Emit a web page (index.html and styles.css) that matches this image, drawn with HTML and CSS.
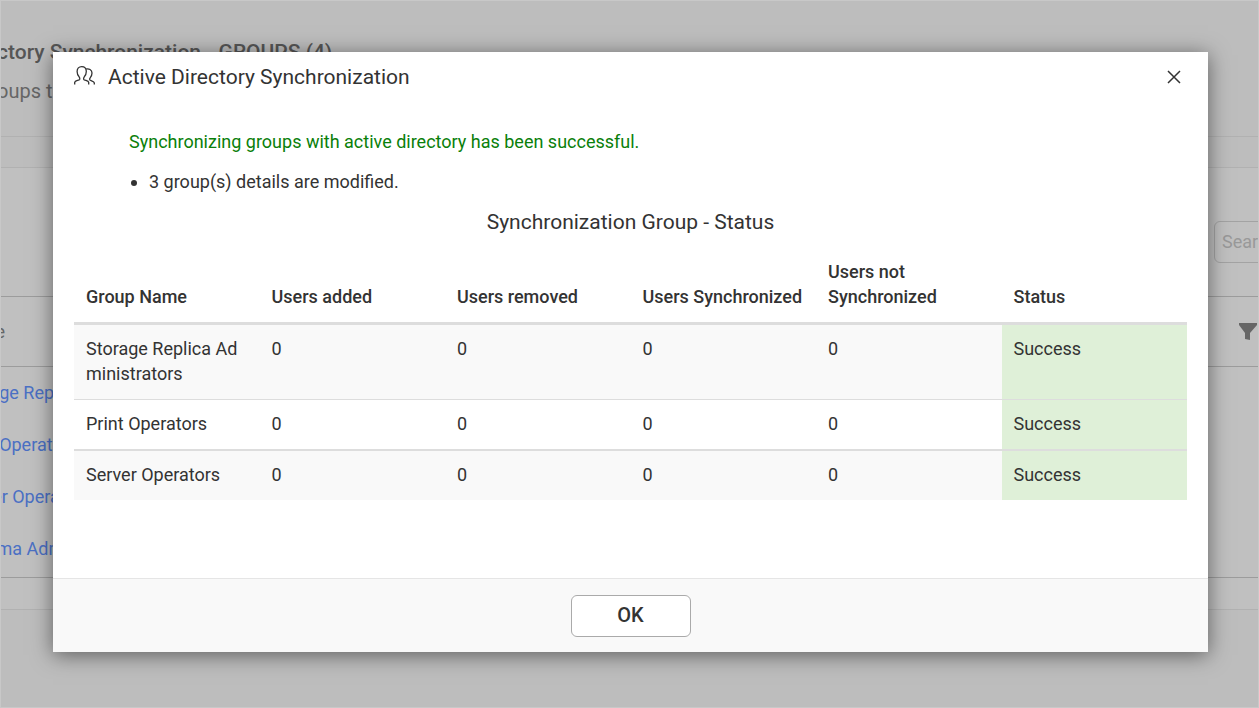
FILE: index.html
```html
<!DOCTYPE html>
<html lang="en">
<head>
<meta charset="utf-8">
<title>Active Directory Synchronization</title>
<link rel="stylesheet" href="styles.css">
</head>
<body>
<div class="page">
  <header class="page-header">
    <h1 class="page-title">ctory Synchronization - GROUPS (4)</h1>
    <p class="page-note">oups t</p>
  </header>
  <div class="strip"></div>
  <main class="panel">
    <div class="toolbar"><input class="search" type="text" placeholder="Search" aria-label="Search"></div>
    <div class="list-head">
      <span>Name</span>
      <button class="filter" type="button" aria-label="Filter">
        <svg width="18" height="18" viewBox="0 0 18 18"><path d="M0 0h18v2l-7 8v7l-5-1v-6L0 2z" fill="#666"/></svg>
      </button>
    </div>
    <ul class="list">
      <li><a href="#">Storage Replica</a></li>
      <li><a href="#">Print Operators</a></li>
      <li><a href="#">Server Operators</a></li>
      <li><a href="#">Schema Admins</a></li>
    </ul>
    <div class="list-foot"></div>
  </main>
</div>
<div class="overlay">
  <section class="modal" role="dialog" aria-modal="true" aria-labelledby="modal-title">
    <header class="modal-header">
      <svg width="22" height="22" viewBox="0 0 22 22" fill="none" stroke="#333" stroke-width="1.300" stroke-linejoin="round"><path d="M.7 18.500v-2.200c.3-1.700 4.300-1.800 5-3 .3-.8.100-1.600-.6-2.500-1.400-1.400-2-3.200-2-5.200 0-3 1.800-4.900 4.600-4.900s4.600 1.900 4.600 4.900c0 2-.6 3.800-2 5.200-.7.900-.9 1.700-.6 2.500.7 1.200 4.700 1.300 5 3v2.200M11.200 3.100c3.900-.9 6.800.5 6.800 4 0 1.700-.6 3.200-1.700 4.500-.7.900-.9 1.600-.5 2.300.7 1 4.300 1.200 4.500 3v1.600"/></svg>
      <h2 class="modal-title" id="modal-title">Active Directory Synchronization</h2>
      <button class="close" type="button" aria-label="Close">
        <svg width="14" height="14" viewBox="0 0 14 14" stroke="#333" stroke-width="1.500"><path d="M1 1l12 12M13 1L1 13"/></svg>
      </button>
    </header>
    <div class="modal-body">
      <div class="summary">
        <p class="success-text">Synchronizing groups with active directory has been successful.</p>
        <ul class="details"><li>3 group(s) details are modified.</li></ul>
      </div>
      <h3 class="status-title" id="status-title">Synchronization Group - Status</h3>
      <table class="status-table" aria-labelledby="status-title">
        <thead>
          <tr><th>Group Name</th><th>Users added</th><th>Users removed</th><th>Users Synchronized</th><th>Users not Synchronized</th><th>Status</th></tr>
        </thead>
        <tbody>
          <tr><td>Storage Replica Administrators</td><td>0</td><td>0</td><td>0</td><td>0</td><td class="ok">Success</td></tr>
          <tr><td>Print Operators</td><td>0</td><td>0</td><td>0</td><td>0</td><td class="ok">Success</td></tr>
          <tr><td>Server Operators</td><td>0</td><td>0</td><td>0</td><td>0</td><td class="ok">Success</td></tr>
        </tbody>
      </table>
    </div>
    <footer class="modal-footer"><button class="btn" type="button">OK</button></footer>
  </section>
</div>
</body>
</html>
```
FILE: styles.css
```css
* { box-sizing: border-box; }
body {
  margin: 0;
  position: relative;
  min-height: 100vh;
  background: #bdbdbd;
  color: #333;
  font: 18px/25px Roboto, sans-serif;
  overflow: hidden;
}
h1, h2, h3, p, ul { margin: 0; padding: 0; }
button { font: inherit; color: inherit; padding: 0; border: 0; background: none; }
svg { display: block; }

.page {
  min-height: 100vh;
  border: 1px solid #c8c8c8;
  color: #666;
  overflow: hidden;
}
.page-header {
  height: 136px;
  margin-left: -4px;
  padding-top: 36px;
  border-bottom: 1px solid #b1b1b1;
}
.page-title { font-size: 21px; line-height: 30px; font-weight: 500; color: #565656; }
.page-note { padding-top: 10px; font-size: 20px; line-height: 28px; }
.strip { height: 31px; border-bottom: 1px solid #b1b1b1; }
.panel { margin-left: -44px; background: #c0c0c0; }
.toolbar { display: flex; justify-content: flex-end; height: 128px; padding-top: 53px; overflow: hidden; }
.search {
  width: 200px;
  height: 42px;
  margin-right: -156px;
  padding: 0 7px 2px;
  border: 1px solid #a3a3a3;
  border-radius: 6px;
  background: transparent;
  font: inherit;
}
.search::placeholder { color: #999; }
.list-head {
  display: flex;
  align-items: center;
  justify-content: space-between;
  height: 71px;
  padding-right: 1px;
  border: solid #9c9c9c;
  border-width: 1px 0;
}
.list { list-style: none; padding-bottom: 2px; border-bottom: 1px solid #9c9c9c; }
.list li { height: 52px; padding-top: 13px; }
.list a { color: #4b70c4; text-decoration: none; }
.list-foot { height: 32px; border-bottom: 1px solid #b1b1b1; }

.overlay {
  position: absolute;
  inset: 0;
  padding: 52px 51px 56px 53px;
  display: flex;
}
.modal {
  flex: 1;
  display: flex;
  flex-direction: column;
  background: #fff;
  box-shadow: 0 3px 20px rgba(0, 0, 0, .5);
}
.modal-header { display: flex; align-items: center; gap: 12px; padding: 10px 26px 10px 21px; }
.modal-title { flex: 1; font-size: 21px; line-height: 30px; font-weight: 400; }
.close { padding: 1px; }
.modal-body { flex: 1; padding: 27px 21px 0; }
.summary { padding-left: 55px; }
.success-text { color: #0a800a; }
.details { padding: 15px 0 16px 20px; }
.status-title { font-size: 21px; line-height: 25px; font-weight: 400; text-align: center; }
.status-table { width: 100%; margin-top: 12px; table-layout: fixed; border-collapse: separate; border-spacing: 0; }
.status-table th {
  padding: 12px 12px 13px;
  border-bottom: 3px solid #ddd;
  font-weight: 500;
  text-align: left;
  vertical-align: bottom;
}
.status-table td { padding: 11px 12px 13px; vertical-align: top; word-break: break-all; }
.status-table tbody tr:nth-child(odd) td { background: #f9f9f9; }
.status-table tbody tr:nth-child(1) td { border-bottom: 1px solid #ddd; }
.status-table tbody tr:nth-child(2) td { border-bottom: 2px solid #ddd; }
.status-table tbody tr td.ok { background: #dff0d8; }
.modal-footer {
  display: flex;
  justify-content: center;
  padding: 16px 0 15px;
  border-top: 1px solid #e5e5e5;
  background: #f9f9f9;
}
.btn {
  width: 120px;
  height: 42px;
  padding-bottom: 1px;
  border: 1px solid #aaa;
  border-radius: 6px;
  background: #fff;
  font-size: 20px;
  font-weight: 500;
}
```
